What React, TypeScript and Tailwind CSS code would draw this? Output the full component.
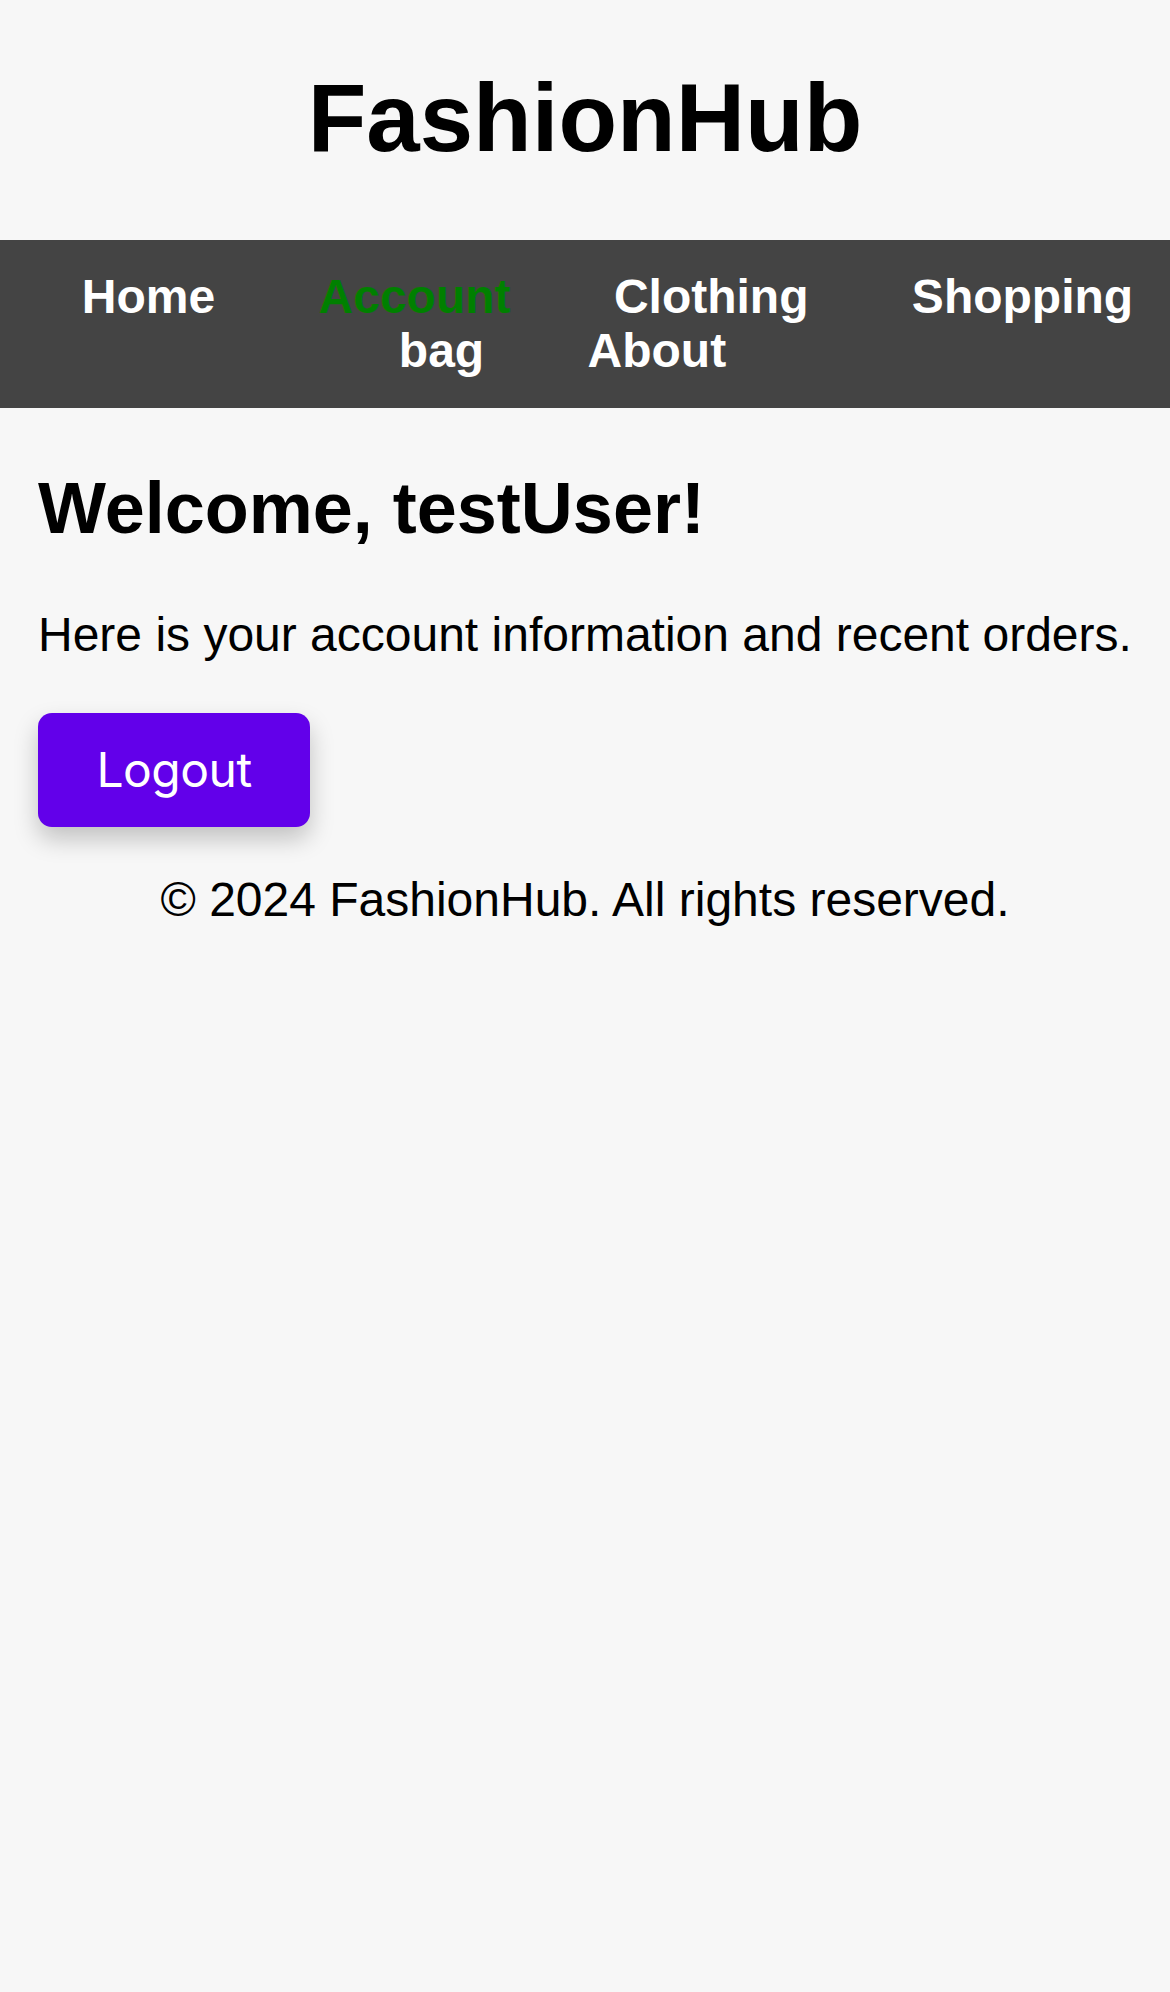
import React from 'react';

const NAV_LINKS = [
  { label: 'Home', active: false },
  { label: 'Account', active: true },
  { label: 'Clothing', active: false },
  { label: 'Shopping bag', active: false },
  { label: 'About', active: false },
];

export default function App() {
  return (
    <div className="min-h-screen bg-[#f7f7f7] font-['Liberation_Sans',Arial,sans-serif] text-black">
      <header className="pt-[64px] pb-[69px] text-center">
        <h1 className="text-[96px] font-bold leading-[107px]">FashionHub</h1>
      </header>

      <nav className="bg-[#444444] py-[30px] text-center text-[48px] font-bold leading-[54px]">
        {NAV_LINKS.map((link, i) => (
          <React.Fragment key={link.label}>
            <a
              href="#"
              className={
                link.active
                  ? 'mx-[45px] text-[#008000] no-underline'
                  : 'mx-[45px] text-white no-underline'
              }
            >
              {link.label}
            </a>
            {i < NAV_LINKS.length - 1 ? ' ' : null}
          </React.Fragment>
        ))}
      </nav>

      <main className="px-[38px]">
        <h2 className="mt-[60px] text-[72px] font-bold leading-[80px]">Welcome, testUser!</h2>
        <p className="mt-[60px] text-[48px] leading-[54px]">
          Here is your account information and recent orders.
        </p>
        <button
          type="button"
          className="mt-[51px] block w-[272px] rounded-[14px] bg-[#6200ea] py-[30px] text-center font-['Inter',sans-serif] text-[48px] leading-[54px] tracking-[-0.5px] text-white shadow-[0_12px_24px_rgba(0,0,0,0.22)]"
        >
          Logout
        </button>
      </main>

      <footer className="mt-[46px] text-center text-[48px] leading-[54px]">
        © 2024 FashionHub. All rights reserved.
      </footer>
    </div>
  );
}
